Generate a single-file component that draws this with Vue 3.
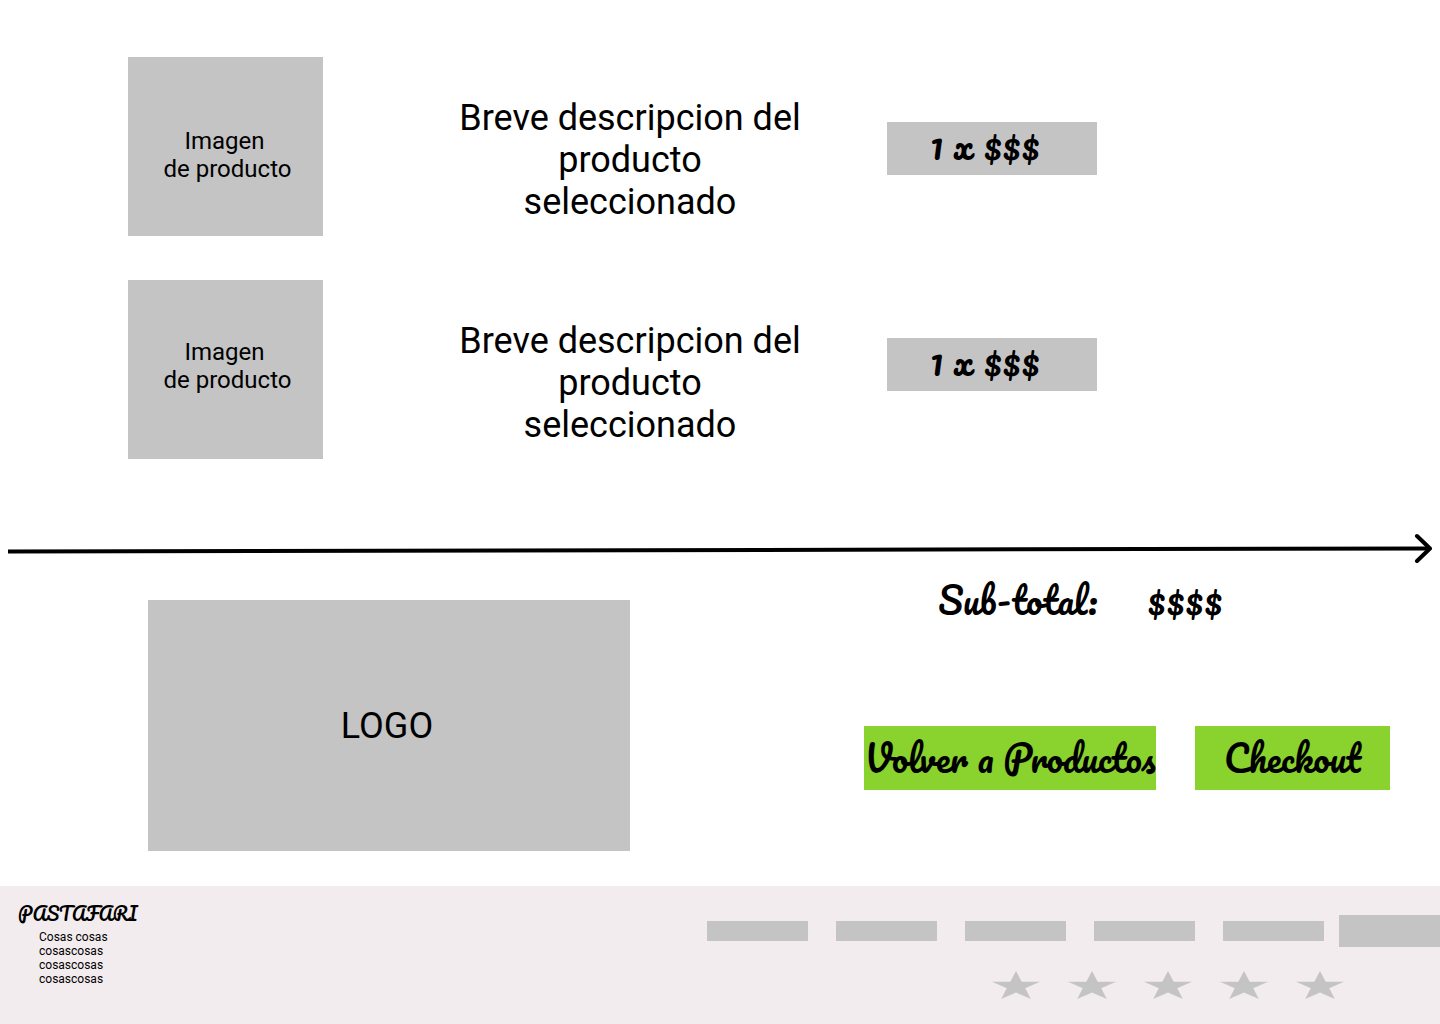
<script setup>
const products = [
  { id: 1, quantity: 1, price: '$$$' },
  { id: 2, quantity: 1, price: '$$$' },
]
const footerInfo = ['Cosas cosas', 'cosascosas', 'cosascosas', 'cosascosas']
</script>

<template>
  <div class="page">
    <main>
      <ul class="products">
        <li v-for="product in products" :key="product.id" class="product">
          <div class="thumb">Imagen&nbsp;<br />de producto</div>
          <p class="description">Breve descripcion del<br />producto<br />seleccionado</p>
          <div class="price script">{{ product.quantity }} x {{ product.price }}</div>
        </li>
      </ul>

      <svg class="arrow" viewBox="0 0 1424 32" aria-hidden="true">
        <path d="M0 18.5 L1422 15.5" stroke-width="4" />
        <path d="M1409 3 L1422 15.5 L1409 28" stroke-width="4" stroke-linecap="round" stroke-linejoin="round" />
      </svg>

      <section class="summary">
        <div class="logo">LOGO</div>
        <div class="checkout">
          <div class="subtotal script">
            <span>Sub-total:</span>
            <span>$$$$</span>
          </div>
          <div class="actions">
            <button type="button" class="script">Volver a Productos</button>
            <button type="button" class="script">Checkout</button>
          </div>
        </div>
      </section>
    </main>

    <footer class="footer">
      <div class="about">
        <h2 class="brand script">PASTAFARI</h2>
        <ul class="info">
          <li v-for="(line, i) in footerInfo" :key="i">{{ line }}</li>
        </ul>
      </div>
      <div class="footer-side">
        <div class="bars">
          <span v-for="n in 5" :key="n" class="bar"></span>
          <span class="bar bar-large"></span>
        </div>
        <div class="stars">
          <svg v-for="n in 5" :key="n" viewBox="0 0 48 28" aria-hidden="true">
            <polygon points="24,0 29.7,10.7 48,10.7 33.2,17.3 38.8,28 24,21.4 9.2,28 14.8,17.3 0,10.7 18.3,10.7" />
          </svg>
        </div>
      </div>
    </footer>
  </div>
</template>

<style>
body {
  margin: 0;
  background: #fff;
}
</style>

<style scoped>
.page {
  color: #000;
  font-family: Roboto, sans-serif;
  overflow-x: hidden;
}

ul,
p,
h2 {
  margin: 0;
  padding: 0;
  list-style: none;
}

.script {
  font-family: Pacifico, Lato, cursive;
  font-weight: 400;
  white-space: nowrap;
}

.products {
  display: flex;
  flex-direction: column;
  gap: 44px;
  padding-top: 57px;
}

.product {
  display: grid;
  grid-template-columns: 128fr 195fr 127fr 360fr 77fr 210fr 343fr;
  align-items: start;
}

.thumb {
  grid-column: 2;
  box-sizing: border-box;
  height: 179px;
  padding: 70px 0 0 4px;
  background: #c4c4c4;
  font-size: 24px;
  line-height: 28px;
  text-align: center;
}

.product:last-child .thumb {
  padding-top: 58px;
}

.description {
  grid-column: 4;
  padding-top: 40px;
  font-size: 36px;
  line-height: 42px;
  text-align: center;
}

.price {
  grid-column: 6;
  box-sizing: border-box;
  height: 53px;
  margin-top: 65px;
  padding-left: 43px;
  background: #c4c4c4;
  font-size: 36px;
  line-height: 46px;
}

.product:last-child .price {
  margin-top: 58px;
}

.arrow {
  display: block;
  box-sizing: border-box;
  width: 100%;
  margin-top: 74px;
  padding: 0 8px;
  fill: none;
  stroke: #000;
}

.summary {
  display: grid;
  grid-template-columns: 148fr 482fr 234fr 526fr 50fr;
  margin-top: 35px;
}

.logo {
  grid-column: 2;
  box-sizing: border-box;
  height: 251px;
  padding: 105px 4px 0 0;
  background: #c4c4c4;
  font-size: 36px;
  line-height: 42px;
  text-align: center;
}

.checkout {
  grid-column: 4;
}

.subtotal {
  display: flex;
  align-items: baseline;
  gap: 50px;
  box-sizing: border-box;
  height: 126px;
  padding-left: 74px;
  font-size: 36px;
  line-height: 0;
}

.actions {
  display: grid;
  grid-template-columns: 292fr 195fr;
  gap: 39px;
}

.actions button {
  height: 64px;
  padding: 0;
  border: 0;
  background: #8ad22d;
  color: #000;
  font-size: 36px;
  line-height: 64px;
  cursor: pointer;
}

.footer {
  display: flex;
  justify-content: space-between;
  box-sizing: border-box;
  min-height: 138px;
  margin-top: 35px;
  background: #f3ecee;
}

.about {
  padding: 12px 0 0 18px;
}

.brand {
  font-size: 18px;
  line-height: 32px;
}

.info {
  padding-left: 21px;
  font-size: 12px;
  line-height: 14px;
}

.footer-side {
  padding-top: 29px;
}

.bars {
  display: flex;
  align-items: center;
  gap: 28px;
}

.bar {
  width: 101px;
  height: 20px;
  background: #c4c4c4;
}

.bar-large {
  height: 32px;
  margin-left: -13px;
}

.stars {
  display: flex;
  justify-content: flex-end;
  gap: 28px;
  padding: 24px 96px 0 0;
}

.stars svg {
  width: 48px;
  height: 28px;
  fill: #c4c4c4;
}
</style>
